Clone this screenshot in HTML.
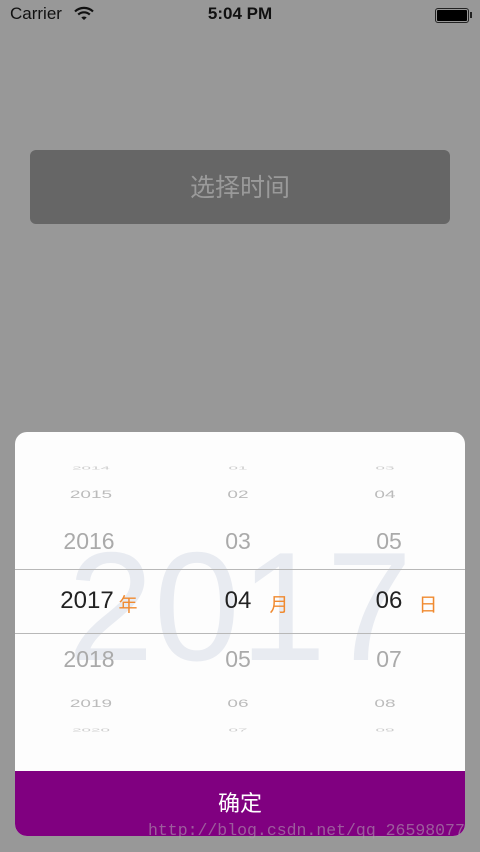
<!DOCTYPE html>
<html><head><meta charset="utf-8"><style>
*{margin:0;padding:0;box-sizing:border-box}
body{width:480px;height:852px;background:#989898;position:relative;overflow:hidden;font-family:"Liberation Sans","Noto Sans CJK SC",sans-serif}
.abs{position:absolute}
.t{position:absolute;text-align:center;white-space:nowrap}
.f{font-size:19px;color:#bbb;transform:scaleY(.6)}
.g{font-size:17px;color:#ccc;transform:scaleY(.25)}
</style></head><body>
<div class="abs" style="left:10px;top:4px;font-size:17px;color:#111">Carrier</div>
<svg class="abs" style="left:74px;top:6px" width="20" height="15" viewBox="0 0 20 15"><path d="M1 5.5a13 13 0 0 1 18 0" stroke="#111" stroke-width="2.2" fill="none"/><path d="M4.2 8.6a8.5 8.5 0 0 1 11.6 0" stroke="#111" stroke-width="2.2" fill="none"/><path d="M7.3 11.5a4 4 0 0 1 5.4 0L10 14z" fill="#111"/></svg>
<div class="abs" style="left:0;width:480px;top:4px;text-align:center;font-size:17px;font-weight:bold;color:#111">5:04 PM</div>
<div class="abs" style="left:435px;top:8px;width:34px;height:15px;border:1px solid #222;border-radius:3px;padding:1px"><div style="background:#000;width:100%;height:100%;border-radius:1px"></div></div>
<div class="abs" style="left:470px;top:12px;width:2px;height:6px;background:#222"></div>

<div class="abs" style="left:30px;top:150px;width:420px;height:74px;background:#666;border-radius:6px;color:#9a9a9a;font-size:25px;text-align:center;line-height:76px">选择时间</div>

<div class="abs" style="left:15px;top:432px;width:450px;height:404px;background:#fdfdfd;border-radius:12px;overflow:hidden">
  <div class="t" style="left:0;width:450px;top:97px;font-size:155px;color:#e8ebf1;line-height:155px">2017</div>
  <div class="abs" style="left:0;top:137px;width:450px;height:1px;background:#b8b8b8"></div>
  <div class="abs" style="left:0;top:201px;width:450px;height:1px;background:#b8b8b8"></div>
  <!-- col1 -->
  <div class="t g" style="left:46px;width:60px;top:26px">2014</div>
  <div class="t f" style="left:46px;width:60px;top:52px">2015</div>
  <div class="t" style="left:42px;width:64px;top:96px;font-size:23px;color:#aaa">2016</div>
  <div class="t" style="left:37px;width:70px;top:155px;font-size:24px;color:#222">2017</div>
  <div class="t" style="left:101px;width:24px;top:158px;font-size:19px;color:#f08a30">年</div>
  <div class="t" style="left:42px;width:64px;top:214px;font-size:23px;color:#aaa">2018</div>
  <div class="t f" style="left:46px;width:60px;top:261px">2019</div>
  <div class="t g" style="left:46px;width:60px;top:288px">2020</div>
  <!-- col2 -->
  <div class="t g" style="left:203px;width:40px;top:26px">01</div>
  <div class="t f" style="left:203px;width:40px;top:52px">02</div>
  <div class="t" style="left:203px;width:40px;top:96px;font-size:23px;color:#aaa">03</div>
  <div class="t" style="left:203px;width:40px;top:155px;font-size:24px;color:#222">04</div>
  <div class="t" style="left:252px;width:24px;top:158px;font-size:19px;color:#f08a30">月</div>
  <div class="t" style="left:203px;width:40px;top:214px;font-size:23px;color:#aaa">05</div>
  <div class="t f" style="left:203px;width:40px;top:261px">06</div>
  <div class="t g" style="left:203px;width:40px;top:288px">07</div>
  <!-- col3 -->
  <div class="t g" style="left:350px;width:40px;top:26px">03</div>
  <div class="t f" style="left:350px;width:40px;top:52px">04</div>
  <div class="t" style="left:354px;width:40px;top:96px;font-size:23px;color:#aaa">05</div>
  <div class="t" style="left:354px;width:40px;top:155px;font-size:24px;color:#222">06</div>
  <div class="t" style="left:401px;width:24px;top:158px;font-size:19px;color:#f08a30">日</div>
  <div class="t" style="left:354px;width:40px;top:214px;font-size:23px;color:#aaa">07</div>
  <div class="t f" style="left:350px;width:40px;top:261px">08</div>
  <div class="t g" style="left:350px;width:40px;top:288px">09</div>
  <div class="abs" style="left:0;top:339px;width:450px;height:65px;background:#800080;color:#fff;font-size:22px;text-align:center;line-height:66px">确定</div>
</div>
<div class="abs" style="left:148px;top:821px;font-family:'Liberation Mono',monospace;font-size:16.5px;color:#b09ab0;opacity:.6">http://blog.csdn.net/qq_26598077</div>
</body></html>
